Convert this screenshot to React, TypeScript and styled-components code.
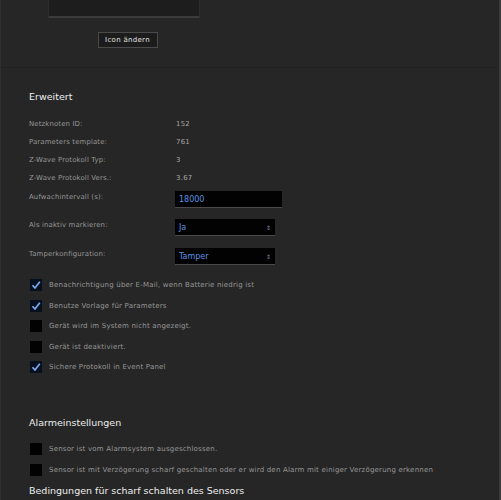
import styled, { createGlobalStyle } from 'styled-components';

const GlobalStyle = createGlobalStyle`
    html, body {
        margin: 0;
        padding: 0;
        background-color: #262626;
    }
    body {
        font-family: 'DejaVu Sans', Verdana, sans-serif;
    }
`;

const infoRows = [
    { label: 'Netzknoten ID:', value: '152' },
    { label: 'Parameters template:', value: '761' },
    { label: 'Z-Wave Protokoll Typ:', value: '3' },
    { label: 'Z-Wave Protokoll Vers.:', value: '3.67' },
];

const deviceFlags = [
    { label: 'Benachrichtigung über E-Mail, wenn Batterie niedrig ist', checked: true },
    { label: 'Benutze Vorlage für Parameters', checked: true },
    { label: 'Gerät wird im System nicht angezeigt.', checked: false },
    { label: 'Gerät ist deaktiviert.', checked: false },
    { label: 'Sichere Protokoll in Event Panel', checked: true },
];

const alarmFlags = [
    { label: 'Sensor ist vom Alarmsystem ausgeschlossen.', checked: false },
    {
        label: 'Sensor ist mit Verzögerung scharf geschalten oder er wird den Alarm mit einiger Verzögerung erkennen',
        checked: false,
    },
];

const Check = ({ checked }: { checked: boolean }) => (
    <CheckBox $checked={checked}>
        {checked && (
            <svg width="10" height="10" viewBox="0 0 10 10">
                <path d="M1.5 5.2 L4 8 L8.8 1.8" fill="none" stroke="#7eaaf0" strokeWidth="1.7" />
            </svg>
        )}
    </CheckBox>
);

const App = () => {
    return (
        <Page>
            <GlobalStyle />
            <TopSection>
                <IconArea>
                    <IconPreview />
                    <SmallButton>Icon ändern</SmallButton>
                </IconArea>
            </TopSection>

            <Section>
                <Heading>Erweitert</Heading>
                <InfoList>
                    {infoRows.map((row) => (
                        <InfoRow key={row.label}>
                            <Label>{row.label}</Label>
                            <Value>{row.value}</Value>
                        </InfoRow>
                    ))}
                </InfoList>

                <FieldRow $gap={4}>
                    <Label>Aufwachintervall (s):</Label>
                    <TextInput defaultValue="18000" />
                </FieldRow>
                <FieldRow $gap={11}>
                    <Label>Als inaktiv markieren:</Label>
                    <Select>
                        <span>Ja</span>
                        <Arrows>⇕</Arrows>
                    </Select>
                </FieldRow>
                <FieldRow $gap={12}>
                    <Label>Tamperkonfiguration:</Label>
                    <Select>
                        <span>Tamper</span>
                        <Arrows>⇕</Arrows>
                    </Select>
                </FieldRow>

                <CheckList $top={14}>
                    {deviceFlags.map((flag) => (
                        <CheckRow key={flag.label}>
                            <Check checked={flag.checked} />
                            <CheckLabel>{flag.label}</CheckLabel>
                        </CheckRow>
                    ))}
                </CheckList>
            </Section>

            <AlarmSection>
                <Heading>Alarmeinstellungen</Heading>
                <CheckList $top={13}>
                    {alarmFlags.map((flag) => (
                        <CheckRow key={flag.label}>
                            <Check checked={flag.checked} />
                            <CheckLabel>{flag.label}</CheckLabel>
                        </CheckRow>
                    ))}
                </CheckList>
                <SubHeading>Bedingungen für scharf schalten des Sensors</SubHeading>
            </AlarmSection>
        </Page>
    );
};

export default App;

const Page = styled.div`
    width: 498px;
    height: 500px;
    overflow: hidden;
    background-color: #262626;
    border-left: 1px solid #2f2f2f;
    border-right: 2px solid #3a3a3a;
    color: #9a9a9a;
`;

const TopSection = styled.div`
    padding-bottom: 19px;
    border-bottom: 1px solid #222222;
`;

const IconArea = styled.div`
    width: 152px;
    margin-left: 47px;
    display: flex;
    flex-direction: column;
    align-items: center;
`;

const IconPreview = styled.div`
    width: 150px;
    height: 16px;
    background-color: #1d1d1d;
    border: 1px solid #2c2c2c;
    border-top: none;
    border-bottom: 2px solid #3a3a3a;
`;

const SmallButton = styled.button`
    margin-top: 14px;
    margin-left: 7px;
    width: 60px;
    height: 16px;
    padding: 0;
    border: 1px solid #4a4a4a;
    background-color: #1c1c1c;
    color: #e0e0e0;
    font-family: 'DejaVu Sans', Verdana, sans-serif;
    font-size: 7px;
    letter-spacing: 0.3px;
`;

const Section = styled.div`
    padding: 22px 28px 0 28px;
`;

const AlarmSection = styled.div`
    padding: 43px 28px 0 28px;
`;

const Heading = styled.div`
    height: 14px;
    line-height: 14px;
    font-size: 9.5px;
    color: #eeeeee;
`;

const SubHeading = styled(Heading)`
    margin-top: 8px;
`;

const InfoList = styled.div`
    margin-top: 11px;
`;

const InfoRow = styled.div`
    display: grid;
    grid-template-columns: 147px 1fr;
    height: 18px;
    line-height: 18px;
`;

const Label = styled.span`
    font-size: 6.9px;
    color: #969696;
    letter-spacing: 0.15px;
`;

const Value = styled.span`
    font-size: 6.9px;
    color: #a8a8a8;
    letter-spacing: 0.3px;
`;

const FieldRow = styled.div<{ $gap: number }>`
    display: grid;
    grid-template-columns: 146px auto;
    align-items: start;
    margin-top: ${(p) => p.$gap}px;
    & > span {
        line-height: 12px;
    }
`;

const TextInput = styled.input`
    width: 107px;
    height: 17px;
    box-sizing: border-box;
    padding: 0 4px;
    background-color: #020202;
    border: none;
    border-bottom: 1px solid #4a4a4a;
    color: #5f92e4;
    font-family: 'DejaVu Sans', Verdana, sans-serif;
    font-size: 8px;
    outline: none;
`;

const Select = styled.div`
    width: 100px;
    height: 17px;
    box-sizing: border-box;
    padding: 0 4px 0 4px;
    display: flex;
    align-items: center;
    justify-content: space-between;
    background-color: #020202;
    border-bottom: 1px solid #4a4a4a;
    color: #5f92e4;
    font-size: 8px;
`;

const Arrows = styled.span`
    font-size: 6px;
    color: #7c8aa0;
`;

const CheckList = styled.div<{ $top: number }>`
    display: flex;
    flex-direction: column;
    gap: 8.5px;
    margin-top: ${(p) => p.$top}px;
`;

const CheckRow = styled.div`
    display: flex;
    align-items: center;
    gap: 7px;
    padding-left: 1px;
    height: 12px;
`;

const CheckBox = styled.div<{ $checked: boolean }>`
    width: 12px;
    height: 12px;
    flex: none;
    background-color: ${(p) => (p.$checked ? '#07101f' : '#020202')};
    display: flex;
    align-items: center;
    justify-content: center;
`;

const CheckLabel = styled.span`
    font-size: 7px;
    color: #969696;
    letter-spacing: 0.2px;
    white-space: nowrap;
`;
